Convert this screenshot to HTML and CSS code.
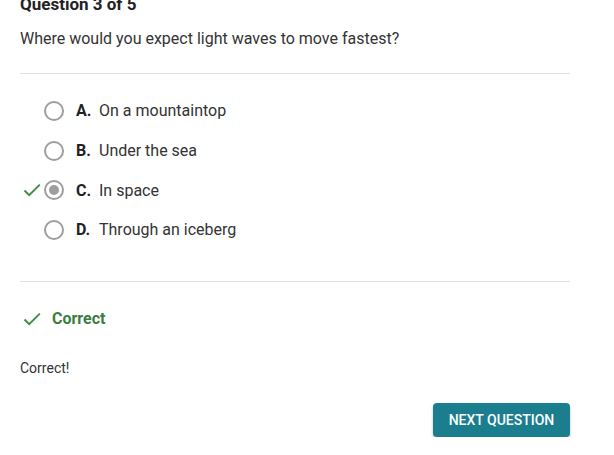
FILE: index.html
```html
<!DOCTYPE html>
<html>
<head>
<meta charset="utf-8">
<link rel="stylesheet" href="styles.css">
</head>
<body>
<div class="page">
  <h2 class="title">Question 3 of 5</h2>
  <p class="question">Where would you expect light waves to move fastest?</p>
  <hr class="divider">
  <ul class="options">
    <li class="option">
      <span class="mark"></span>
      <span class="radio"></span>
      <span class="letter">A.</span>
      <span class="label">On a mountaintop</span>
    </li>
    <li class="option">
      <span class="mark"></span>
      <span class="radio"></span>
      <span class="letter">B.</span>
      <span class="label">Under the sea</span>
    </li>
    <li class="option">
      <span class="mark"><svg viewBox="0 0 24 24" width="24" height="24"><path d="M4.5 12.5 L9.2 17.2 L19.8 6.6" fill="none" stroke="#3f8f43" stroke-width="2"/></svg></span>
      <span class="radio checked"></span>
      <span class="letter">C.</span>
      <span class="label">In space</span>
    </li>
    <li class="option">
      <span class="mark"></span>
      <span class="radio"></span>
      <span class="letter">D.</span>
      <span class="label">Through an iceberg</span>
    </li>
  </ul>
  <hr class="divider">
  <div class="result">
    <span class="mark"><svg viewBox="0 0 24 24" width="24" height="24"><path d="M4.5 12.5 L9.2 17.2 L19.8 6.6" fill="none" stroke="#3f8f43" stroke-width="2"/></svg></span>
    <span class="result-text">Correct</span>
  </div>
  <p class="feedback">Correct!</p>
  <div class="actions">
    <button class="next">NEXT QUESTION</button>
  </div>
</div>
</body>
</html>
```

FILE: styles.css
```css
html, body {
  margin: 0;
  padding: 0;
  background: #fff;
  overflow: hidden;
}
body {
  font-family: Roboto, "Liberation Sans", sans-serif;
  color: #333;
}
.page {
  padding: 0 44px 0 20px;
  display: flex;
  flex-direction: column;
}
.title {
  margin: -6px 0 0;
  font-size: 17px;
  line-height: 20px;
  font-weight: 700;
  color: #222;
}
.question {
  margin: 15px 0 0;
  font-size: 16px;
  line-height: 20px;
  color: #333;
}
.divider {
  margin: 24px 0 0;
  border: 0;
  height: 1px;
  background: #dedede;
}
.options {
  list-style: none;
  margin: 17px 0 0;
  padding: 0;
}
.option {
  display: flex;
  align-items: center;
  height: 39.7px;
  font-size: 16px;
}
.mark {
  width: 24px;
  height: 24px;
  display: flex;
  align-items: center;
  justify-content: center;
  flex: none;
}
.radio {
  box-sizing: border-box;
  width: 20px;
  height: 20px;
  border: 2px solid #9e9e9e;
  border-radius: 50%;
  flex: none;
  display: flex;
  align-items: center;
  justify-content: center;
}
.radio.checked::after {
  content: "";
  width: 10px;
  height: 10px;
  border-radius: 50%;
  background: #9e9e9e;
}
.letter {
  margin-left: 12px;
  width: 23px;
  font-weight: 700;
  color: #222;
}
.label {
  color: #333;
}
.options + .divider {
  margin-top: 31px;
}
.result {
  margin-top: 25px;
  display: flex;
  align-items: center;
  height: 24px;
}
.result-text {
  margin-left: 8px;
  font-size: 16px;
  font-weight: 700;
  color: #3b7d3f;
}
.feedback {
  margin: 27px 0 0;
  font-size: 14px;
  line-height: 20px;
  color: #333;
}
.actions {
  display: flex;
  justify-content: flex-end;
  margin-top: 25px;
}
.next {
  height: 34px;
  width: 137px;
  border: 0;
  border-radius: 4px;
  background: #1b7e8e;
  color: #fff;
  font-family: Roboto, "Liberation Sans", sans-serif;
  font-size: 14px;
  font-weight: 500;
  box-shadow: 0 2px 3px rgba(0,0,0,0.25);
  padding: 0;
}
```
